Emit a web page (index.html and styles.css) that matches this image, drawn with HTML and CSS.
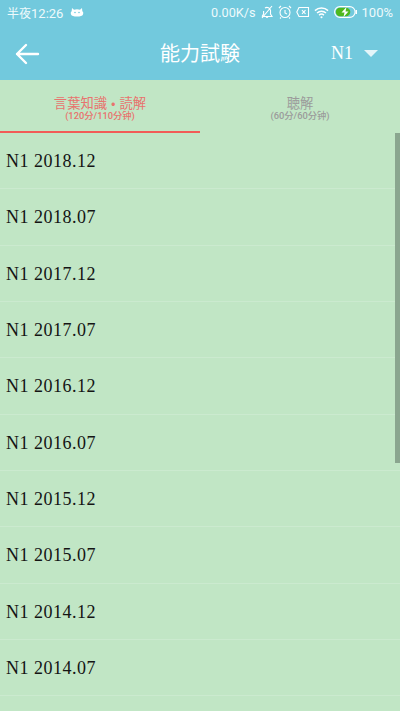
FILE: index.html
```html
<!DOCTYPE html>
<html lang="ja">
<head>
<meta charset="utf-8">
<title>能力試験</title>
<link rel="stylesheet" href="styles.css">
</head>
<body>
<div class="app">
  <header class="top">
    <div class="status">
      <div class="status-side">
        <span class="clock"><span class="clock-cjk">半夜</span>12:26</span>
        <svg class="ic-cat" viewBox="0 0 14 10" width="14" height="10"><path d="M2 1 L4 2.700 Q7 2 10 2.700 L12 1 L12.300 4 Q14 5.500 13 7.500 Q12 9.500 7 9.500 Q2 9.500 1 7.500 Q0 5.500 1.700 4 Z" fill="#fff"/><circle cx="5" cy="5.500" r=".8" fill="#72c9dd"/><circle cx="9" cy="5.500" r=".8" fill="#72c9dd"/></svg>
      </div>
      <div class="status-side right">
        <span class="net net-speed">0.00K/s</span>
        <svg viewBox="0 0 14 14" width="14" height="14" fill="none" stroke="#fff" stroke-width="1.100"><path d="M2 11.500h10L10.500 9V5.500A3.500 3.500 0 0 0 5 3M3.600 6V9L2 11.500M6 11.500q1 2 2 0M2 13 12 1"/></svg>
        <svg viewBox="0 0 14 14" width="14" height="14" fill="none" stroke="#fff" stroke-width="1.100"><circle cx="7" cy="7.500" r="5"/><path d="M7 5v3l2 1M1 3l2-2M13 3l-2-2M3 12.500l-1 1M11 12.500l1 1"/></svg>
        <svg viewBox="0 0 14 12" width="14" height="12" fill="none" stroke="#fff" stroke-width="1.100"><path d="M3 1.500h9.500v9H3L.8 6Z"/><path d="M6 4.200l3.500 3.600M9.500 4.200 6 7.800"/></svg>
        <svg viewBox="0 0 16 13" width="15" height="13" fill="none" stroke="#fff" stroke-width="1.500"><path d="M1 4.500a10 10 0 0 1 14 0M3.200 7a7 7 0 0 1 9.600 0M5.400 9.300a4 4 0 0 1 5.200 0"/><circle cx="8" cy="11.500" r="1.100" fill="#fff" stroke="none"/></svg>
        <svg class="ic-batt" viewBox="0 0 23 12" width="23" height="12"><rect x=".6" y=".6" width="20.500" height="10.800" rx="5.400" fill="none" stroke="#fff" stroke-width="1.100"/><rect x="1.800" y="1.800" width="14.500" height="8.400" rx="4.200" fill="#4fb81e"/><rect x="21.500" y="4" width="1.500" height="4" fill="#fff"/><path d="M12.500 1 7.500 6.500H10.500L9.500 11 14.500 5.500H11.500Z" fill="#fff"/></svg>
        <span class="net">100%</span>
      </div>
    </div>
    <div class="toolbar">
      <svg class="back" viewBox="0 0 26 24" width="26" height="24" fill="none" stroke="#fff" stroke-width="2.400" stroke-linecap="round" stroke-linejoin="round"><path d="M24 12H3M12 3 3 12l9 9"/></svg>
      <h1 class="title">能力試験</h1>
      <div class="level">
        <span>N1</span>
        <i class="caret"></i>
      </div>
    </div>
  </header>
  <nav class="tabs">
    <div class="tab active">
      <span class="tab-name">言葉知識<span class="dot">・</span>読解</span>
      <span class="tab-sub">(120分/110分钟)</span>
    </div>
    <div class="tab">
      <span class="tab-name">聴解</span>
      <span class="tab-sub">(60分/60分钟)</span>
    </div>
  </nav>
  <main class="list">
    <div class="row">N1 2018.12</div>
    <div class="row">N1 2018.07</div>
    <div class="row">N1 2017.12</div>
    <div class="row">N1 2017.07</div>
    <div class="row">N1 2016.12</div>
    <div class="row">N1 2016.07</div>
    <div class="row">N1 2015.12</div>
    <div class="row">N1 2015.07</div>
    <div class="row">N1 2014.12</div>
    <div class="row">N1 2014.07</div>
    <div class="row"></div>
    <div class="scrollbar"></div>
  </main>
</div>
</body>
</html>
```
FILE: styles.css
```css
* { box-sizing: border-box; }
html, body { margin: 0; padding: 0; }
body { width: 400px; height: 711px; overflow: hidden; background: #c1e6c5; }
.app { display: flex; flex-direction: column; height: 711px; overflow: hidden; }
.top { background: #72c9dd; color: #fff; flex: 0 0 80px; display: flex; flex-direction: column; }
.status { flex: 0 0 24px; display: flex; justify-content: space-between; align-items: center; padding: 0 7px 0 7px; font: 13px "Roboto", "Noto Sans CJK SC", sans-serif; color: #eefafc; }
.status-side { display: flex; align-items: center; gap: 7px; }
.status-side.right { gap: 4px; }
.clock-cjk { font-size: 12px; }
.net-speed { font-size: 12.700px; }
.ic-batt { margin: 0 1px; }
.toolbar { flex: 1; display: flex; align-items: center; position: relative; padding: 3px 0 0 14px; }
.title { position: absolute; left: 0; right: 0; top: 1px; bottom: 0; margin: 0; display: flex; align-items: center; justify-content: center; font: 400 20px "Liberation Serif", "Noto Sans CJK TC", serif; }
.level { margin-left: auto; display: flex; align-items: center; gap: 11px; padding-right: 22px; font: 18px "Liberation Serif", serif; }
.caret { width: 0; height: 0; border-left: 7px solid transparent; border-right: 7px solid transparent; border-top: 7px solid #e4f5f9; }
.tabs { flex: 0 0 53px; display: flex; }
.tab { flex: 1; display: flex; flex-direction: column; align-items: center; padding-top: 15px; color: #9b9b9b; border-bottom: 2px solid transparent; }
.tab.active { color: #e8736e; border-bottom-color: #f25c57; }
.tab-name { font: 13.300px/15px "Noto Sans CJK TC", sans-serif; }
.dot { margin: 0 4px; }
.tab-sub { font: 500 9.300px/12px "Roboto", "Noto Sans CJK SC", sans-serif; }
.list { flex: 1; position: relative; overflow: hidden; }
.row { height: 56.330px; padding: 2px 0 0 6px; display: flex; align-items: center; border-bottom: 1px solid #cbeacf; font: 18px "Liberation Serif", serif; color: #141414; letter-spacing: .5px; }
.scrollbar { position: absolute; top: 0; right: 0; width: 5px; height: 330px; background: #8aa68f; }
```
